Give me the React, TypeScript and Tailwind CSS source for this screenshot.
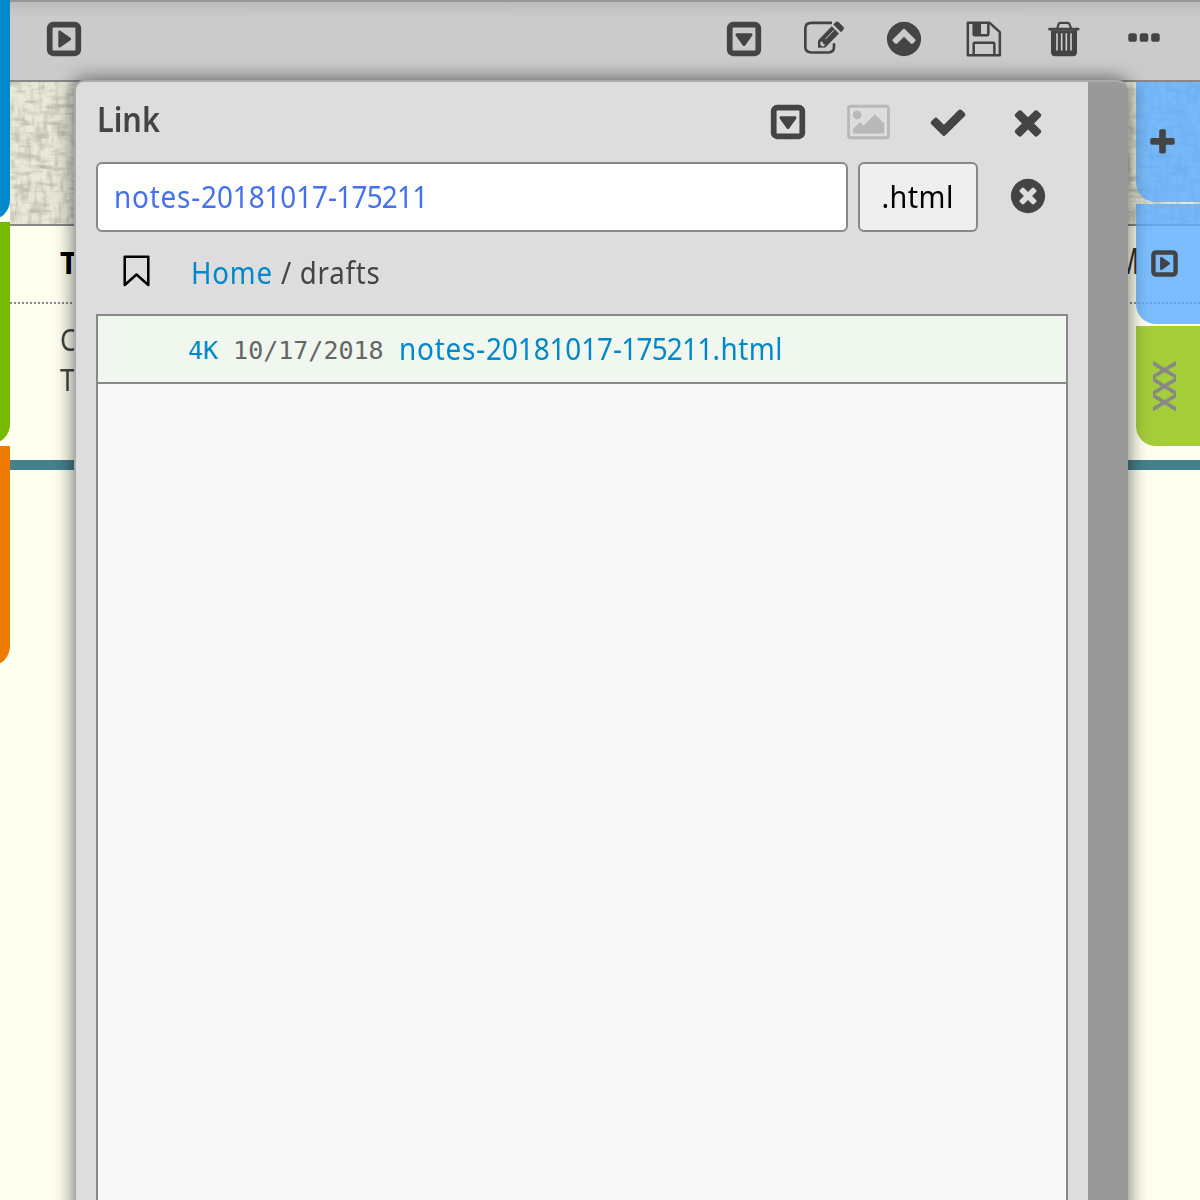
import type { ReactNode } from "react";

const DISC =
  "M1664 896q0 209-103 385.5t-279.5 279.5-385.5 103-385.5-103-279.5-279.5-103-385.5 103-385.5 279.5-279.5 385.5-103 385.5 103 279.5 279.5 103 385.5z";

const PATHS = {
  check:
    "M1671 566q0 40-28 68l-724 724-136 136q-28 28-68 28t-68-28l-136-136-362-362q-28-28-28-68t28-68l136-136q28-28 68-28t68 28l294 295 656-657q28-28 68-28t68 28l136 136q28 28 28 68z",
  times:
    "M1490 1322q0 40-28 68l-136 136q-28 28-68 28t-68-28l-294-294-294 294q-28 28-68 28t-68-28l-136-136q-28-28-28-68t28-68l294-294-294-294q-28-28-28-68t28-68l136-136q28-28 68-28t68 28l294 294 294-294q28-28 68-28t68 28l136 136q28 28 28 68t-28 68l-294 294 294 294q28 28 28 68z",
  plus: "M1600 736v192q0 40-28 68t-68 28h-416v416q0 40-28 68t-68 28h-192q-40 0-68-28t-28-68v-416h-416q-40 0-68-28t-28-68v-192q0-40 28-68t68-28h416v-416q0-40 28-68t68-28h192q40 0 68 28t28 68v416h416q40 0 68 28t28 68z",
  dots: "M576 736v192q0 40-28 68t-68 28h-192q-40 0-68-28t-28-68v-192q0-40 28-68t68-28h192q40 0 68 28t28 68zm512 0v192q0 40-28 68t-68 28h-192q-40 0-68-28t-28-68v-192q0-40 28-68t68-28h192q40 0 68 28t28 68zm512 0v192q0 40-28 68t-68 28h-192q-40 0-68-28t-28-68v-192q0-40 28-68t68-28h192q40 0 68 28t28 68z",
  up:
    "M1293 1101l102-102q19-19 19-45t-19-45l-454-454q-19-19-45-19t-45 19l-454 454q-19 19-19 45t19 45l102 102q19 19 45 19t45-19l307-307 307 307q19 19 45 19t45-19z" +
    DISC,
  clear:
    "M1277 1122q0-26-19-45l-181-181 181-181q19-19 19-45 0-27-19-46l-90-90q-19-19-46-19-26 0-45 19l-181 181-181-181q-19-19-45-19-27 0-46 19l-90 90q-19 19-19 46 0 26 19 45l181 181-181 181q-19 19-19 45 0 27 19 46l90 90q19 19 46 19 26 0 45-19l181-181 181 181q19 19 45 19 27 0 46-19l90-90q19-19 19-46z" +
    DISC,
};

function Glyph({ name, className = "size-10" }: { name: keyof typeof PATHS; className?: string }) {
  return (
    <svg viewBox="0 0 1792 1792" className={className} fill="currentColor" fillRule="evenodd">
      <path d={PATHS[name]} />
    </svg>
  );
}

function CaretBox({ className = "size-10" }: { className?: string }) {
  return (
    <svg viewBox="0 0 1792 1792" className={className} fill="currentColor">
      <rect x="256" y="256" width="1280" height="1280" rx="150" fill="none" stroke="currentColor" strokeWidth="256" />
      <path d="M1273 675q17 33-5 61l-320 448q-19 27-52 27t-52-27l-320-448q-22-28-5-61 17-35 57-35h640q40 0 57 35z" />
    </svg>
  );
}

function EditIcon() {
  return (
    <svg viewBox="312 58.5 120 120" className="size-10 overflow-visible" fill="none" stroke="currentColor">
      <path d="M396 70H334Q316 70 316 87V142Q316 159 334 159H385Q402 159 402 142V131" strokeWidth="8" />
      <path d="M354 145V123L395 80L417 102L376 144Z" fill="currentColor" stroke="none" />
      <path d="M400 75L408 67Q412 64 417 69L430 82Q434 87 430 91L423 98Z" fill="currentColor" stroke="none" />
      <path d="M376 119L402 92" stroke="#cbcbcb" strokeWidth="3" />
      <path d="M362 126L368 127L369 133L374 134L374 139L367 141L361 135Z" fill="#cbcbcb" stroke="none" />
    </svg>
  );
}

function SaveIcon() {
  return (
    <svg viewBox="72 58.5 120 120" className="size-10" fill="none" stroke="currentColor" strokeWidth="7.5" strokeLinejoin="round">
      <path d="M83.5 70H149L179.5 98V167.5H83.5Z" />
      <path d="M101 71V104Q101 107 104 107H142Q145 107 145 104V71" />
      <path d="M101 71H123V107H101Z" fill="currentColor" stroke="none" />
      <path d="M101 167V133Q101 130 104 130H160Q163 130 163 133V167" />
    </svg>
  );
}

function TrashIcon() {
  return (
    <svg viewBox="312 58.5 120 120" className="size-10" fill="none" stroke="currentColor">
      <path d="M352 86L356 73Q358 70 362 70H382Q386 70 388 73L393 86" strokeWidth="6.5" />
      <rect x="325" y="85" width="93" height="8" rx="2" fill="currentColor" stroke="none" />
      <path d="M333 92H411V158Q411 170 399 170H345Q333 170 333 158Z" fill="currentColor" stroke="none" />
      <path d="M351 101V153M365 101V153M379 101V153M393 101V153" stroke="#cbcbcb" strokeWidth="5" />
    </svg>
  );
}

function PictureIcon() {
  return (
    <svg viewBox="0 0 1920 1792" className="h-10 w-[43px] text-[#b8b8b8]" fill="currentColor">
      <rect x="64" y="192" width="1792" height="1408" rx="96" fill="none" stroke="currentColor" strokeWidth="128" />
      <circle cx="448" cy="576" r="192" />
      <path d="M1664 960v448H256v-192l320-320 160 160 512-512z" />
    </svg>
  );
}

function Cell({ children }: { children: ReactNode }) {
  return <div className="flex h-[79px] w-20 items-center justify-center">{children}</div>;
}

/* Woven canvas texture: two stretched noise layers crossed over each other. */
function Canvas() {
  return (
    <svg className="block h-[142px] w-full" preserveAspectRatio="none">
      <filter id="weft" x="0" y="0" width="100%" height="100%">
        <feTurbulence type="fractalNoise" baseFrequency="0.05 0.18" numOctaves="3" seed="4" />
        <feColorMatrix values="0 0 0 0 0.45  0 0 0 0 0.45  0 0 0 0 0.38  2.2 0 0 0 -1.02" />
        <feGaussianBlur stdDeviation="0.6" />
      </filter>
      <filter id="warp" x="0" y="0" width="100%" height="100%">
        <feTurbulence type="fractalNoise" baseFrequency="0.18 0.05" numOctaves="3" seed="9" />
        <feColorMatrix values="0 0 0 0 0.48  0 0 0 0 0.48  0 0 0 0 0.41  2 0 0 0 -0.95" />
        <feGaussianBlur stdDeviation="0.6" />
      </filter>
      <rect width="100%" height="100%" fill="#e9e9da" />
      <rect width="100%" height="100%" filter="url(#weft)" />
      <rect width="100%" height="100%" filter="url(#warp)" />
    </svg>
  );
}

function Page() {
  return (
    <div className="ml-2.5 font-['Noto_Sans',sans-serif]">
      <header className="flex h-[82px] items-start border-t-2 border-b-2 border-t-[#999] border-b-[#888] bg-[linear-gradient(#bcbcbc,#cbcbcb_16px)] pr-4 pl-3.5 text-[#444]">
        <div className="-mt-[2.4px] flex flex-1">
          <Cell>
            <CaretBox className="size-10 -rotate-90" />
          </Cell>
        </div>
        <div className="-mt-[2.4px] flex">
          <Cell><CaretBox /></Cell>
          <Cell><EditIcon /></Cell>
          <Cell><Glyph name="up" /></Cell>
          <Cell><SaveIcon /></Cell>
          <Cell><TrashIcon /></Cell>
          <Cell><Glyph name="dots" /></Cell>
        </div>
      </header>
      <Canvas />
      <div className="flex h-20 items-center justify-between border-t-2 border-b-2 border-t-[#888] border-b-[#888] pr-[61px] pb-0.5 pl-[50px] [border-bottom-style:dotted]">
        <span className="text-[30px] leading-none font-bold text-black">T</span>
        <span className="-translate-y-0.5 origin-right scale-x-[0.65] text-[36px] leading-none font-medium text-[#333]">M</span>
      </div>
      <div className="h-[156px] pt-4 pl-[50px] text-[30px] leading-10 text-[#444]">
        <div className="origin-left scale-x-90">C</div>
        <div className="origin-left scale-x-90">T</div>
      </div>
      <div className="h-2.5 bg-[#46808d]" />
    </div>
  );
}

function FileStem() {
  return (
    <>
      <span className="tracking-[0.85px]">notes-</span>
      <span className="tracking-[-0.1px]">20181017</span>
      <span className="tracking-[-0.8px]">-175211</span>
    </>
  );
}

function Dialog() {
  return (
    <section className="absolute top-20 left-[74px] flex h-[1140px] w-[1054px] overflow-hidden rounded-t-[10px] border-t-2 border-l-2 border-[#aaa] bg-[#ddd] font-['Noto_Sans',sans-serif] text-[#444] shadow-[0_0_20px_rgba(0,0,0,0.6)]">
      <div className="flex w-[1012px] flex-col px-5">
        <div className="flex h-20 items-start">
          <h1 className="flex-1 pt-[17px] pl-px text-[34px] leading-10 font-semibold">
            <span className="inline-block origin-left scale-x-[0.9]">Link</span>
          </h1>
          <Cell><CaretBox /></Cell>
          <Cell><PictureIcon /></Cell>
          <Cell><Glyph name="check" /></Cell>
          <Cell><Glyph name="times" /></Cell>
        </div>
        <div className="flex h-[70px] gap-2.5 text-[30px] leading-[66px]">
          <div className="w-[752px] rounded-md border-2 border-[#888] bg-white pl-4 text-[#4571f0]">
            <span className="inline-block origin-left scale-x-[0.93]">
              <FileStem />
            </span>
          </div>
          <div className="w-[120px] rounded-md border-2 border-[#888] bg-[#eee] text-center text-black">
            <span className="inline-block scale-x-[0.96] tracking-[0.4px]">.html</span>
          </div>
          <div className="flex w-20 items-center justify-center pb-0.5">
            <Glyph name="clear" />
          </div>
        </div>
        <div className="flex h-[82px] items-center text-[30px]">
          <div className="flex w-20 justify-center">
            <svg viewBox="368 104 80 95" className="h-8 w-[27px] -translate-y-0.5 text-black" fill="none" stroke="currentColor" strokeWidth="7.5" strokeLinejoin="round">
              <path d="M373 109H443V193L408 162L373 193Z" />
            </svg>
          </div>
          <div className="ml-[15px] flex origin-left scale-x-[0.92] gap-[9px] pb-0.5 tracking-[0.9px]">
            <span className="text-[#08c]">Home</span>
            <span className="tracking-normal">/</span>
            <span>drafts</span>
          </div>
        </div>
        <div className="flex-1 border-2 border-[#888] bg-[#f8f8f8]">
          <div className="flex h-[68px] items-center border-b-2 border-[#888] bg-[#f0f7ef] pl-[90px]">
            <div className="flex gap-[15px] pt-1 font-['DejaVu_Sans_Mono',monospace] text-[25px] text-[#666]">
              <span className="text-[#08c]">4K</span>
              <span>10/17/2018</span>
            </div>
            <span className="ml-[15px] origin-left scale-x-[0.93] pb-0.5 text-[30px] text-[#08c]">
              <FileStem />
              <span className="tracking-[0.5px]">.html</span>
            </span>
          </div>
        </div>
      </div>
      <div className="flex-1 bg-[#999]" />
    </section>
  );
}

function LeftTabs() {
  return (
    <nav className="absolute top-0 -left-2.5 flex w-5 flex-col gap-0.5">
      <div className="h-[220px] rounded-br-[20px] bg-[#08c]" />
      <div className="h-[222px] rounded-br-[20px] bg-[#7b0]" />
      <div className="h-[220px] rounded-br-[20px] bg-[#ee7a00]" />
    </nav>
  );
}

function RightTabs() {
  return (
    <nav className="absolute top-[82px] right-0 flex w-16 flex-col gap-0.5 text-[#444] *:flex *:h-[120px] *:items-center *:rounded-bl-[20px] *:pl-3">
      <div className="bg-[#5aadff]/80">
        <Glyph name="plus" className="-ml-px size-[31px]" />
      </div>
      <div className="bg-[#5aadff]/80 pb-px">
        <CaretBox className="ml-px size-[31px] -rotate-90" />
      </div>
      <div className="bg-[#99c61f]/88">
        <svg viewBox="0 0 23 50" className="ml-[5px] h-[50px] w-[23px]" stroke="#888" strokeWidth="3.8">
          <path d="M-1 1.5L24 16.5M24 1.5L-1 16.5M-1 17.5L24 33M24 17.5L-1 33M-1 33.8L24 48.8M24 33.8L-1 48.8" />
        </svg>
      </div>
    </nav>
  );
}

export default function App() {
  return (
    <main className="relative h-[1200px] w-[1200px] overflow-hidden bg-[#fffff0]">
      <Page />
      <LeftTabs />
      <RightTabs />
      <Dialog />
    </main>
  );
}
